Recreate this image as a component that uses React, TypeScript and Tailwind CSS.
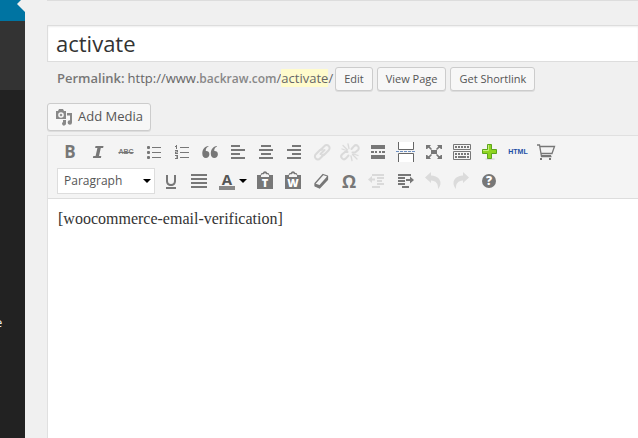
import type { ReactNode } from "react";

const INK = "#777";
const SANS = "font-['Open_Sans','Noto_Sans',sans-serif]";

function Svg({ children, faded = false }: { children: ReactNode; faded?: boolean }) {
  return (
    <svg
      width="20"
      height="20"
      viewBox="0 0 20 20"
      fill={INK}
      aria-hidden="true"
      className={faded ? "shrink-0 overflow-visible opacity-20" : "shrink-0 overflow-visible"}
    >
      {children}
    </svg>
  );
}

function Tool({ label, children, wide = false }: { label: string; children: ReactNode; wide?: boolean }) {
  return (
    <button
      type="button"
      aria-label={label}
      title={label}
      className={`flex h-7 shrink-0 items-center text-[#777] ${wide ? "w-[38px] pl-1" : "w-7 justify-center"}`}
    >
      {children}
    </button>
  );
}

function Lines({ rows, h = 2 }: { rows: number[][]; h?: number }) {
  return (
    <>
      {rows.map(([x, y, w]) => (
        <rect key={`${x}-${y}`} x={x} y={y} width={w} height={h} />
      ))}
    </>
  );
}

function Clipboard({ letter }: { letter: string }) {
  return (
    <Svg>
      <path fillRule="evenodd" d="M2 4h3.500l1-2h1.200a2.400 2.400 0 0 1 4.600 0h1.200l1 2H18v14H2zM6 4.500V6h8V4.500l-1-1.200h-1.700L10 2 8.700 3.300H7z" />
      <text x="10" y="16" textAnchor="middle" fill="#fff" fontSize="11" fontWeight="800" fontFamily="Open Sans, sans-serif">
        {letter}
      </text>
    </Svg>
  );
}

function TopTools() {
  return (
    <div className="flex">
      <Tool label="Bold">
        <span className="text-[17px] leading-5 font-bold">B</span>
      </Tool>
      <Tool label="Italic">
        <Svg>
          <path d="M7.500 4h8l-.4 2h-2.300l-1.800 8h2.300l-.4 2h-8l.4-2h2.300l1.800-8H7.100z" />
        </Svg>
      </Tool>
      <Tool label="Strikethrough">
        <span className="font-['Liberation_Sans',sans-serif] text-[7px] leading-5 font-bold line-through">ABC</span>
      </Tool>
      <Tool label="Bulleted list">
        <Svg>
          <rect x="3" y="4" width="3" height="3" rx="1" />
          <rect x="3" y="9" width="3" height="3" rx="1" />
          <rect x="3" y="14" width="3" height="3" rx="1" />
          <Lines h={1} rows={[[8, 5, 9], [8, 10, 9], [8, 15, 9]]} />
        </Svg>
      </Tool>
      <Tool label="Numbered list">
        <Svg>
          <path d="M4 3h1v4H4zM3 4h1v1H3zM3 8h3v2.500H4v.5h2v1H3v-2.500h2V9H3zM3 13h3v4H3v-1h2v-.5H4v-1h1V14H3z" />
          <Lines h={1} rows={[[8, 5, 9], [8, 10, 9], [8, 15, 9]]} />
        </Svg>
      </Tool>
      <Tool label="Blockquote">
        <Svg>
          <path d="M8.500 4.500C6.500 5 5.600 7 5.800 9c2-.2 3.600 1 3.600 3.200S7.800 16 5.900 16C3.600 16 2.300 14.200 2.300 11.800 2.300 7.500 4.500 4.300 8.500 4zM17 4.500c-2 .5-2.900 2.500-2.700 4.500 2-.2 3.600 1 3.600 3.200S16.300 16 14.400 16c-2.300 0-3.600-1.800-3.600-4.200C10.800 7.500 13 4.300 17 4z" />
        </Svg>
      </Tool>
      <Tool label="Align left">
        <Svg>
          <Lines rows={[[3, 3, 9], [3, 7, 14], [3, 11, 9], [3, 15, 14]]} />
        </Svg>
      </Tool>
      <Tool label="Align center">
        <Svg>
          <Lines rows={[[5, 3, 10], [3, 7, 14], [5, 11, 10], [3, 15, 14]]} />
        </Svg>
      </Tool>
      <Tool label="Align right">
        <Svg>
          <Lines rows={[[8, 3, 9], [3, 7, 14], [8, 11, 9], [3, 15, 14]]} />
        </Svg>
      </Tool>
      <Tool label="Insert link">
        <Svg faded>
          <g fill="none" stroke={INK} strokeWidth="2" strokeLinecap="round">
            <path d="M8.500 8l4-4a2.900 2.900 0 0 1 4.200 0 2.900 2.900 0 0 1 0 4.200l-4 4a2.900 2.900 0 0 1-2.700.8" />
            <path d="M12 12.500l-4 4a2.900 2.900 0 0 1-4.200 0 2.900 2.900 0 0 1 0-4.200l4-4a2.900 2.900 0 0 1 2.700-.8" />
            <path d="M8.500 12l4-4" />
          </g>
        </Svg>
      </Tool>
      <Tool label="Remove link">
        <Svg faded>
          <g fill="none" stroke={INK} strokeWidth="2" strokeLinecap="round">
            <path d="M11.500 7l2.500-2.800a2.700 2.700 0 0 1 4 3.800L15 10.500H12.500M8.500 13.500L6 16.300a2.700 2.700 0 0 1-4-3.800L5 10h2.500" />
            <path strokeWidth="1.300" d="M3 3.500L7.500 8M8 2l1 4.500M2 7l4.500 1.500M17 17l-4.500-4.500M12 18.500L11 14M18 13.500L13.500 12" />
          </g>
        </Svg>
      </Tool>
      <Tool label="Insert Read More tag">
        <Svg>
          <Lines h={4} rows={[[3, 3, 14], [3, 13, 14]]} />
          <Lines rows={[[3, 9, 3], [7, 9, 2], [11, 9, 2], [14, 9, 3]]} />
        </Svg>
      </Tool>
      <Tool label="Page break">
        <Svg>
          <path fill="#fff" stroke="#666" d="M2.500 0v7.500h15V0M2.500 20v-8.500h15V20" />
          <path stroke="#6d8fc0" strokeDasharray="3 1" d="M0 9.500h20" />
        </Svg>
      </Tool>
      <Tool label="Fullscreen">
        <Svg>
          <path d="M7 8h6v4H7zM2 3h5L5.700 4.500 8 7 7 8 4.500 5.700 3 7H2zM18 3h-5l1.300 1.500L12 7l1 1 2.500-2.300L17 7h1zM2 17h5l-1.300-1.500L8 13l-1-1-2.500 2.300L3 13H2zM18 17h-5l1.300-1.500L12 13l1-1 2.500 2.300L17 13h1z" />
        </Svg>
      </Tool>
      <Tool label="Toggle toolbar">
        <Svg>
          <path fill="none" stroke={INK} d="M1.500 2.500h17v5h-17zM1.500 9.500h17v8h-17z" />
          <path stroke={INK} strokeWidth="2" strokeDasharray="2 1" d="M3 5h14M3 12h14" />
          <path stroke={INK} strokeWidth="2" d="M3 15h2M6 15h8M15 15h2" />
        </Svg>
      </Tool>
      <Tool label="Add shortcode">
        <Svg>
          <ellipse cx="10" cy="17" rx="5" ry="1" fill="#ddd" />
          <path fill="#8fd420" stroke="#5da51b" d="M7.500 2.500h4v5h5v4h-5v5h-4v-5h-5v-4h5z" />
          <path stroke="#c5ef7c" d="M8.500 3v5.500H3" fill="none" />
        </Svg>
      </Tool>
      <Tool label="Edit HTML">
        <span className="font-['Liberation_Sans',sans-serif] text-[7px] leading-5 font-bold text-[#1d4fa5]">HTML</span>
      </Tool>
      <Tool label="Shop shortcodes">
        <Svg>
          <path fill="none" stroke={INK} strokeWidth="1.300" d="M1 3h2.500l2 11.500h10M4 4.500h14.500L16 11.500H5" />
          <path stroke={INK} strokeWidth="2" d="M5 14h10M4 17h2M13 17h2" />
        </Svg>
      </Tool>
    </div>
  );
}

function BottomTools() {
  return (
    <div className="flex items-center">
      <div className="relative mr-0.5 ml-px shrink-0">
        <select
          aria-label="Text format"
          defaultValue="Paragraph"
          className="block h-[26px] w-[98px] appearance-none border border-[#ddd] bg-white pl-1.5 text-xs text-[#555]"
        >
          <option>Paragraph</option>
          <option>Heading 1</option>
          <option>Heading 2</option>
        </select>
        <span className="pointer-events-none absolute top-[11px] right-1 border-x-4 border-t-4 border-x-transparent border-t-black" />
      </div>
      <Tool label="Underline">
        <Svg>
          <path d="M5 4h2v6c0 2 1 3 3 3s3-1 3-3V4h2v6c0 3-2 5-5 5s-5-2-5-5z" />
          <rect x="5" y="16" width="10" height="2" />
        </Svg>
      </Tool>
      <Tool label="Justify">
        <Svg>
          <Lines rows={[[2, 3, 16], [2, 7, 16], [2, 11, 16], [2, 15, 16]]} />
        </Svg>
      </Tool>
      <Tool label="Text color" wide>
        <Svg>
          <text x="10" y="14" textAnchor="middle" fill="#555" fontSize="15" fontWeight="700" fontFamily="Open Sans, sans-serif">
            A
          </text>
          <rect x="2" y="15" width="16" height="4" fill="#888" />
        </Svg>
        <span className="ml-0.5 border-x-4 border-t-4 border-x-transparent border-t-black" />
      </Tool>
      <Tool label="Paste as text">
        <Clipboard letter="T" />
      </Tool>
      <Tool label="Paste from Word">
        <Clipboard letter="W" />
      </Tool>
      <Tool label="Clear formatting">
        <Svg>
          <path
            fill="#f4f4f4"
            stroke={INK}
            strokeWidth="1.300"
            strokeLinejoin="round"
            d="M4 12.500L12 3.500l4.500 1.500v3.500L8.500 17 4 15z"
          />
          <path d="M4 12.500l4.500 1.500L16.500 5v3.500L8.500 17 4 15z" />
        </Svg>
      </Tool>
      <Tool label="Special character">
        <span className="text-lg leading-5 font-bold">Ω</span>
      </Tool>
      <Tool label="Decrease indent">
        <Svg faded>
          <path d="M1 8.500L5 5v2.500h3v2H5V12z" />
          <Lines rows={[[5, 3, 12], [10, 6, 7], [10, 9, 5], [10, 12, 7], [5, 15, 8]]} />
        </Svg>
      </Tool>
      <Tool label="Increase indent">
        <Svg>
          <path d="M19 9l-4-3.500V8h-4v2h4v2.500z" />
          <Lines rows={[[3, 3, 13], [3, 6, 7], [3, 9, 7], [3, 12, 7], [7, 15, 7]]} />
        </Svg>
      </Tool>
      <Tool label="Undo">
        <Svg faded>
          <path d="M2 6.500L8 1v3.500c6 .2 9.500 3.500 9.500 7.500 0 2-.8 4.200-2.500 6 .4-5-2-8.500-7-8.500V12z" />
        </Svg>
      </Tool>
      <Tool label="Redo">
        <Svg faded>
          <path d="M18 6.500L12 1v3.500C6 4.700 2.500 8 2.500 12c0 2 .8 4.200 2.500 6-.4-5 2-8.500 7-8.500V12z" />
        </Svg>
      </Tool>
      <Tool label="Keyboard shortcuts">
        <Svg>
          <circle cx="10" cy="10" r="7" />
          <text x="10" y="14" textAnchor="middle" fill="#fff" fontSize="12" fontWeight="800" fontFamily="Open Sans, sans-serif">
            ?
          </text>
        </Svg>
      </Tool>
    </div>
  );
}

const smallButton =
  "h-6 shrink-0 rounded-[3px] border border-[#ccc] bg-[#f7f7f7] px-2 text-[11px] leading-[22px] text-[#555] shadow-[0_1px_0_rgba(0,0,0,0.08)]";

export default function App() {
  return (
    <div className={`flex min-h-screen overflow-hidden bg-[#f0f0f0] text-[13px] text-[#666] ${SANS}`}>
      <nav aria-label="Admin menu" className="relative flex w-[25px] shrink-0 flex-col overflow-hidden bg-[#222]">
        <div className="h-[21px] bg-[#0074a2]" />
        <div className="h-[69px] bg-[#333]" />
        <span className="absolute -top-1 right-0 border-y-8 border-r-8 border-y-transparent border-r-[#f0f0f0]" />
        <a href="#menu" className="mt-[222px] -ml-[5px] text-[13px] leading-5 text-[#eee]">
          e
        </a>
      </nav>
      <main className="flex min-w-0 flex-1 flex-col pl-[22px]">
        <div className="h-px bg-[#ddd]" />
        <input
          aria-label="Title"
          defaultValue="activate"
          className="mt-6 h-[37px] w-full border border-r-0 border-[#ddd] bg-white px-2 pb-0.5 text-[22px] text-[#333] shadow-[inset_0_1px_2px_rgba(0,0,0,0.07)] outline-none"
        />
        <div className="mt-[5px] flex h-6 items-center pl-2.5 whitespace-nowrap">
          <strong className="font-semibold text-[#777]">Permalink:</strong>
          <a href="#permalink" className="ml-[3px]">
            http://www.
            <span className="text-xs font-semibold text-[#888]">backraw.com</span>/
            <span className="bg-[#fffbcc]">activate</span>/
          </a>
          <div className="ml-0.5 flex gap-1">
            <button type="button" className={smallButton}>Edit</button>
            <button type="button" className={smallButton}>View Page</button>
            <button type="button" className={smallButton}>Get Shortlink</button>
          </div>
        </div>
        <button
          type="button"
          className="mt-3 flex h-7 items-center gap-[5px] self-start rounded-[3px] border border-[#ccc] bg-[#f7f7f7] px-[7px] text-[13px] text-[#555] shadow-[0_1px_0_rgba(0,0,0,0.08)]"
        >
          <svg width="18" height="18" viewBox="0 0 18 18" fill="#888" aria-hidden="true">
            <path fillRule="evenodd" d="M1 3h2l1-2h4l1 2h2v8H1zM6 4.200a2.800 2.800 0 1 0 0 5.600 2.800 2.800 0 0 0 0-5.600zM6 5.500L7.500 7 6 8.500 4.500 7z" />
            <path d="M12 5h5v9.500a2.200 2.200 0 1 1-2-2.200V7.500h-3zM8 12h3v3.500a2 2 0 1 1-3-1.600z" />
          </svg>
          Add Media
        </button>
        <section aria-label="Editor" className="mt-1 flex flex-1 flex-col border-t border-l border-[#e0e0e0] bg-white">
          <div role="toolbar" aria-label="Formatting" className="flex flex-col gap-px border-b border-[#ddd] bg-[#f4f4f4] pt-0.5 pb-[3px] pl-2">
            <TopTools />
            <BottomTools />
          </div>
          <div className="px-2.5 pt-2 font-['Liberation_Serif',serif] text-base text-[#333]">
            <p>[woocommerce-email-verification]</p>
          </div>
        </section>
      </main>
    </div>
  );
}
